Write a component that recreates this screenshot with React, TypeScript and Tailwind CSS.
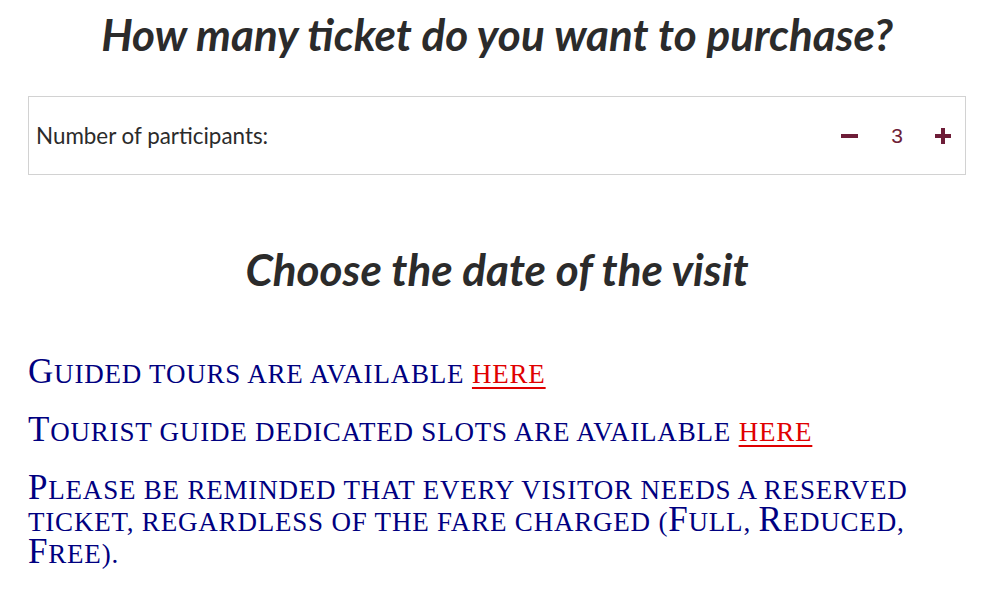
import React from "react";

function SC({ text }: { text: string }) {
  const parts: { big: boolean; s: string }[] = [];
  for (const ch of text) {
    const big = /[A-Z]/.test(ch);
    const last = parts[parts.length - 1];
    if (last && last.big === big) last.s += ch;
    else parts.push({ big, s: ch });
  }
  return (
    <>
      {parts.map((p, i) =>
        p.big ? (
          <span key={i}>{p.s}</span>
        ) : (
          <span key={i} className="uppercase text-[27px] leading-[1px]">
            {p.s}
          </span>
        )
      )}
    </>
  );
}

export default function App() {
  return (
    <div className="w-[982px] h-[592px] bg-white overflow-hidden">
      <div className="ml-[28px] w-[938px]">
        <h1 className="text-center text-[44px] leading-[48px] font-bold italic text-[#2b2b2b] pt-[10px] font-['Lato',sans-serif]">
          How many ticket do you want to purchase?
        </h1>
        <div className="mt-[38px] h-[79px] border border-[#d2d2d2] flex items-center justify-between pl-[7px] pr-[14px]">
          <span className="text-[22.4px] text-[#2b2b2b] font-['Lato',sans-serif]">Number of participants:</span>
          <div className="flex items-center font-['Liberation_Sans',Arial,sans-serif] text-[#6e1d38]">
            <span className="block w-[17px] h-[4px] bg-[#6e1d38]" />
            <span className="ml-[33px] text-[21px] leading-none">3</span>
            <span className="ml-[32px] relative w-[16px] h-[16px]">
              <span className="absolute left-0 top-[6px] w-[16px] h-[4px] bg-[#6e1d38]" />
              <span className="absolute left-[6px] top-0 w-[4px] h-[16px] bg-[#6e1d38]" />
            </span>
          </div>
        </div>
        <h2 className="mt-[70px] text-center text-[44px] leading-[48px] font-bold italic text-[#2b2b2b] font-['Lato',sans-serif]">
          Choose the date of the visit
        </h2>
        <div className="mt-[63px] text-[#000080] font-['Liberation_Serif',serif] text-[35px] leading-[32px] tracking-[0.8px]">
          <p>
            <SC text="Guided tours are available " />
            <a href="#" className="text-[#e00000] underline underline-offset-[4px] decoration-[2px]">
              <SC text="here" />
            </a>
          </p>
          <p className="mt-[26px]">
            <SC text="Tourist guide dedicated slots are available " />
            <a href="#" className="text-[#e00000] underline underline-offset-[4px] decoration-[2px]">
              <SC text="here" />
            </a>
          </p>
          <p className="mt-[26px]">
            <SC text="Please be reminded that every visitor needs a reserved" />
            <br />
            <SC text="ticket, regardless of the fare charged (Full, Reduced," />
            <br />
            <SC text="Free)." />
          </p>
        </div>
      </div>
    </div>
  );
}
